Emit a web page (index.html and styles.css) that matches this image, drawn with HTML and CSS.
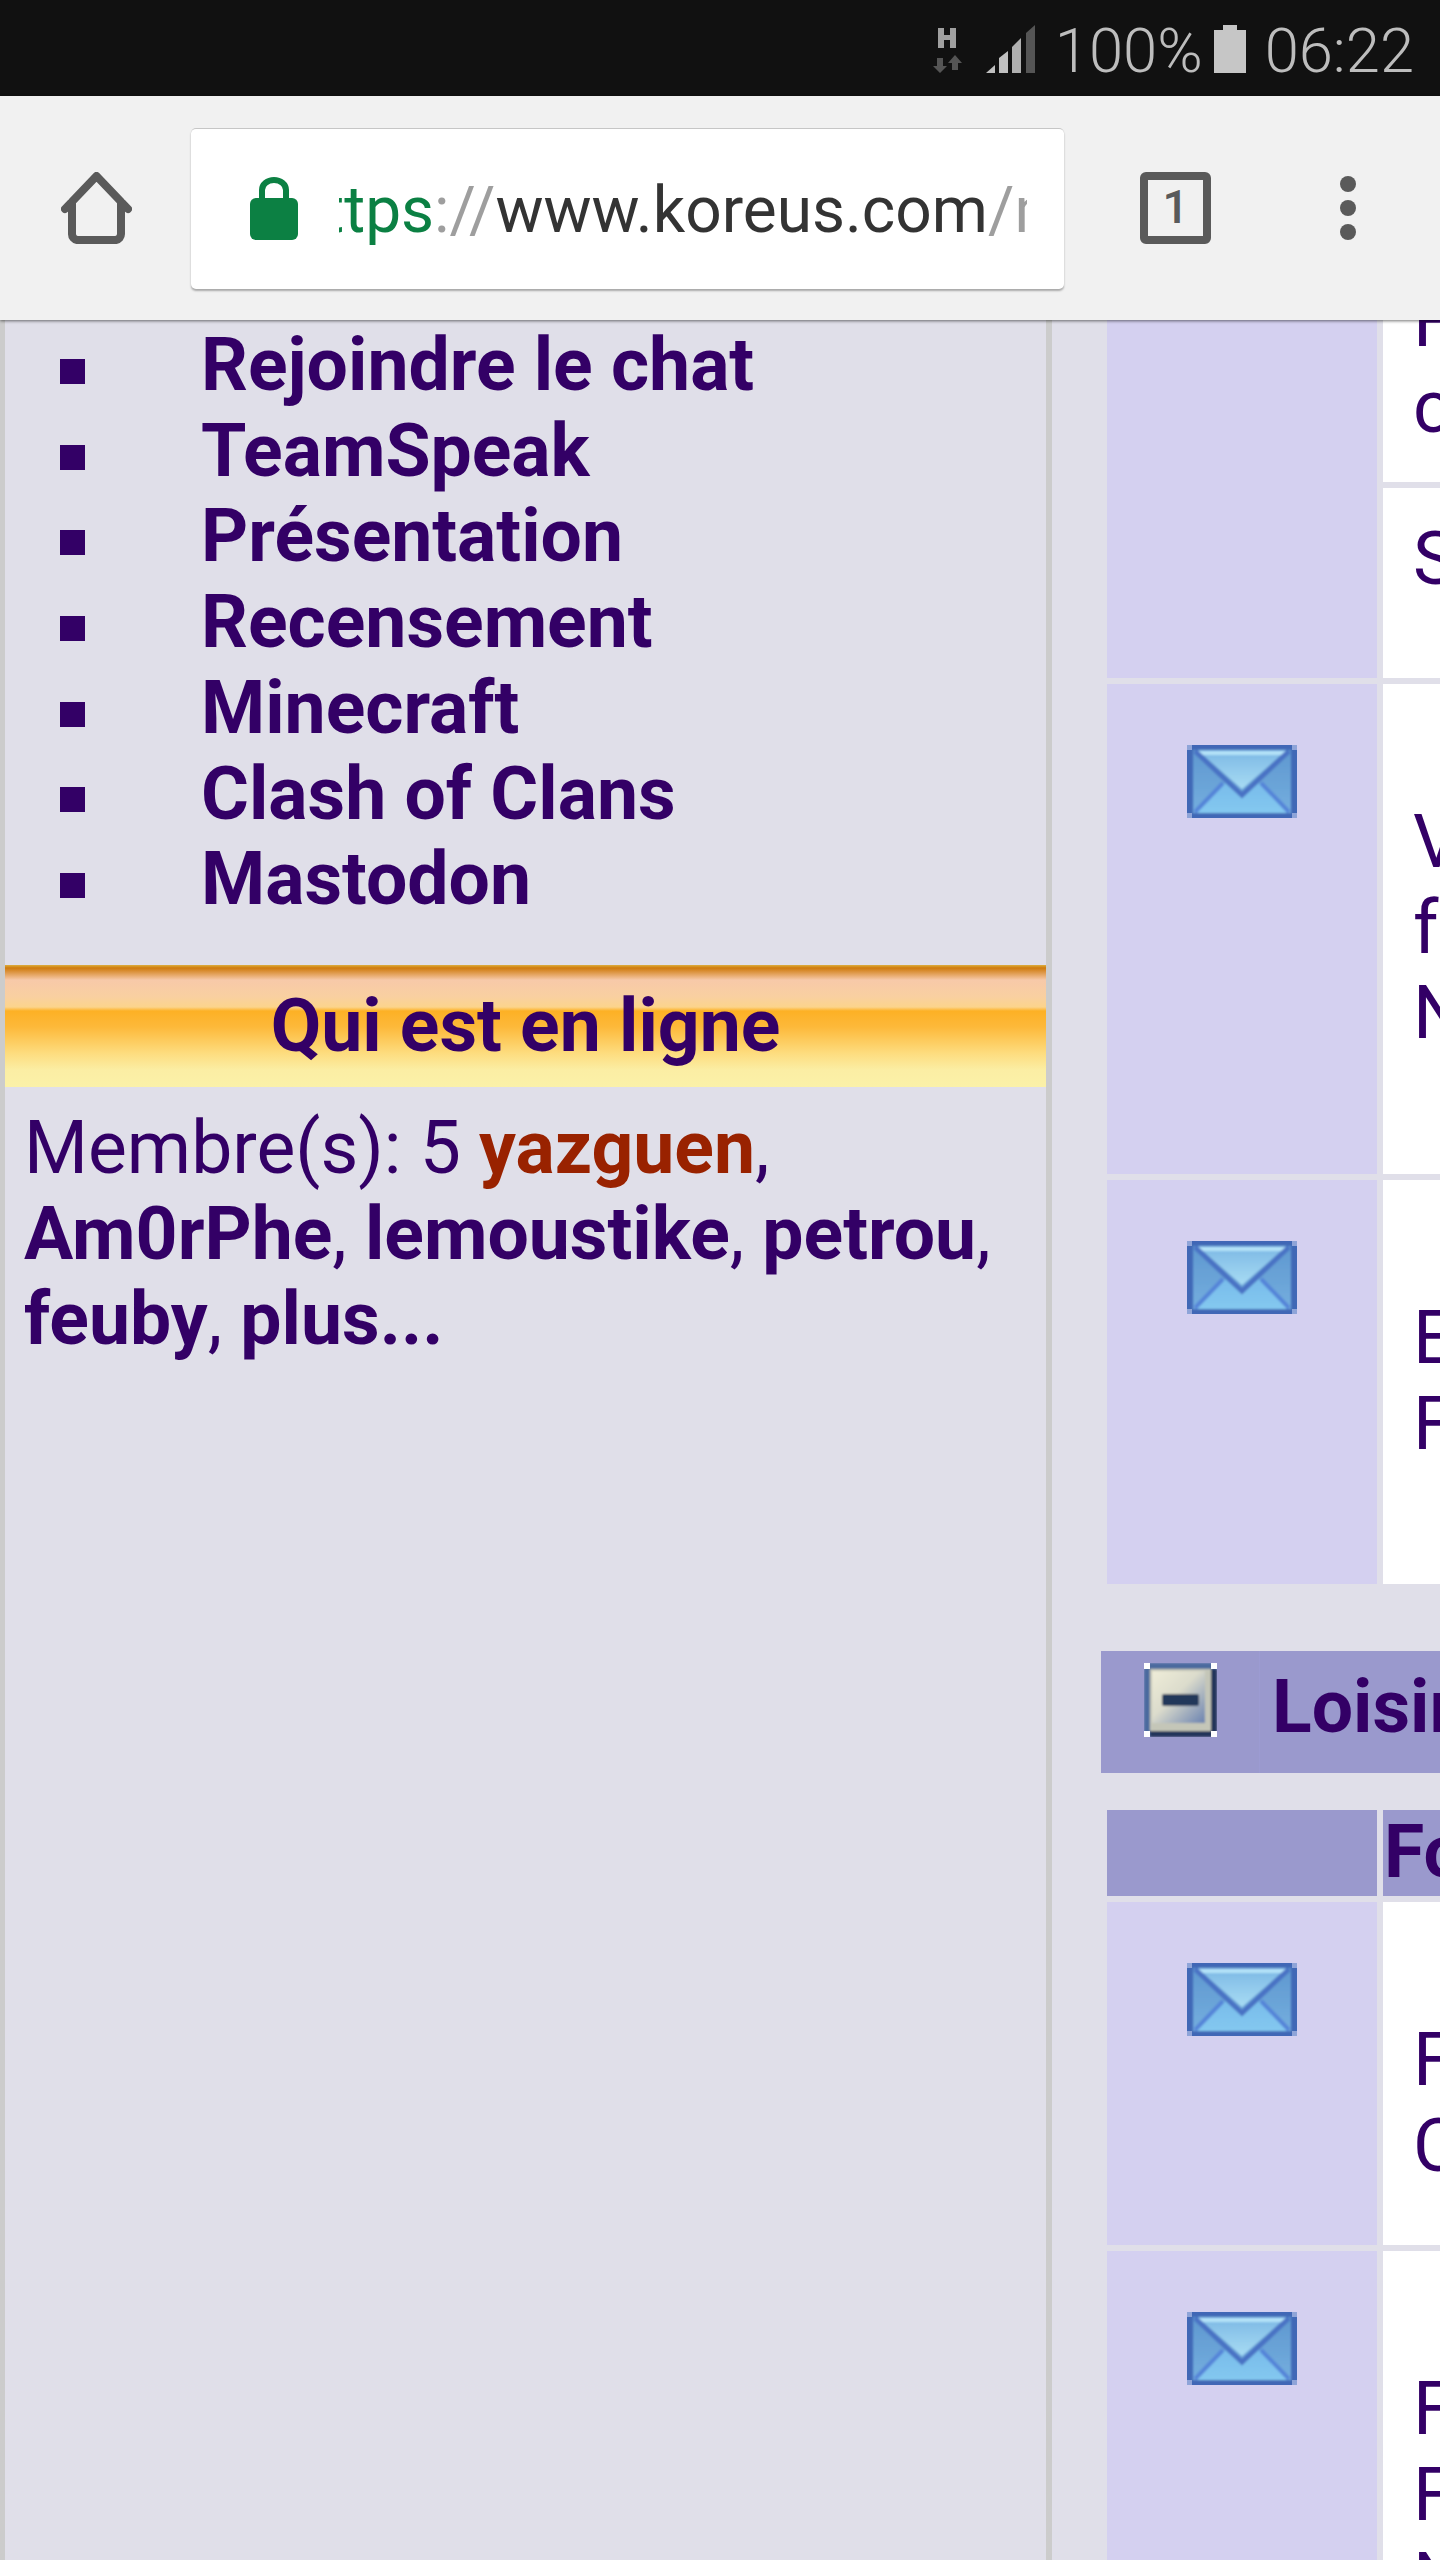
FILE: index.html
```html
<!DOCTYPE html>
<html lang="fr">
<head>
  <meta charset="UTF-8">
  <title>Koreus</title>
  <link rel="stylesheet" href="styles.css">
</head>
<body>
  <svg class="defs" width="0" height="0">
    <defs>
      <filter id="soft" x="-5%" y="-5%" width="110%" height="110%">
        <feGaussianBlur stdDeviation="0.9"/>
      </filter>
      <linearGradient id="envBottom" x1="0" y1="0" x2="0" y2="1">
        <stop offset="0" stop-color="#78bcea"/>
        <stop offset="1" stop-color="#84c8f0"/>
      </linearGradient>
      <linearGradient id="envSide" x1="0" y1="0" x2="0" y2="1">
        <stop offset="0" stop-color="#5f98d0"/>
        <stop offset="1" stop-color="#74aede"/>
      </linearGradient>
      <linearGradient id="envFlap" x1="0" y1="0" x2="0" y2="1">
        <stop offset="0" stop-color="#7cb8e4"/>
        <stop offset="1" stop-color="#a8dcf4"/>
      </linearGradient>
      <linearGradient id="minusFace" x1="0" y1="0" x2="1" y2="1">
        <stop offset="0" stop-color="#eeecd8"/>
        <stop offset="0.45" stop-color="#dcdccc"/>
        <stop offset="1" stop-color="#6a82b0"/>
      </linearGradient>
      <symbol id="envelope" viewBox="0 0 110 73">
        <rect width="110" height="73" fill="#4068b6"/>
        <g filter="url(#soft)">
          <rect x="6" y="5" width="98" height="63" fill="url(#envSide)"/>
          <path d="M8 68L38 38L55 52L72 38L102 68Z" fill="url(#envBottom)"/>
          <path d="M10 5H100L55 44Z" fill="url(#envFlap)"/>
          <rect x="12" y="6" width="86" height="4" fill="#b4e2f8"/>
          <path d="M8 6L55 50L102 6" fill="none" stroke="#4a72c4" stroke-width="5"/>
          <path d="M8 67L36 38M102 67L74 38" fill="none" stroke="#5584d8" stroke-width="4"/>
          <rect x="0" y="0" width="110" height="4" fill="#4068b6"/>
          <rect x="0" y="68" width="110" height="5" fill="#4068b6"/>
        </g>
        <path d="M0 0h5v5H0zM105 0h5v5h-5zM0 68h5v5H0zM105 68h5v5h-5z" fill="#8ea4d8"/>
      </symbol>
    </defs>
  </svg>

  <header class="statusbar">
    <svg class="ic-network" width="30" height="46" viewBox="0 0 30 46">
      <path d="M5 0h6v7h6V0h6v20h-6v-8h-6v8H5z" fill="#a0a0a0"/>
      <path d="M4 30h6v8h4l-7 7-7-7h4z" fill="#555"/>
      <path d="M22 27l7 8h-4v7h-6v-7h-4z" fill="#555"/>
    </svg>
    <svg class="ic-signal" width="49" height="48" viewBox="0 0 49 48">
      <path d="M0 48L9 40V48Z" fill="#c0c0c0"/>
      <path d="M13 33L22 26V48H13Z" fill="#c0c0c0"/>
      <path d="M26 22L35 13V48H26Z" fill="#b0b0b0"/>
      <path d="M40 8L49 0V48H40Z" fill="#555"/>
    </svg>
    <span class="status-text pct">100%</span>
    <svg class="ic-battery" width="32" height="48" viewBox="0 0 32 48">
      <path d="M9 0h14v5h9v43H0V5h9z" fill="#c6c6c6"/>
    </svg>
    <span class="status-text clock">06:22</span>
  </header>

  <div class="toolbar">
    <svg class="ic-home" width="71" height="72" viewBox="0 0 71 72">
      <path d="M4 37L35.500 4L67 37M11 30V62a6 6 0 0 0 5 6H55a6 6 0 0 0 5-6V30" fill="none" stroke="#5a5a5a" stroke-width="8" stroke-linecap="round" stroke-linejoin="round"/>
    </svg>
    <div class="omnibox">
      <svg class="ic-lock" width="48" height="63" viewBox="0 0 48 63">
        <path d="M12 24V13a12 10 0 0 1 24 0v11" fill="none" stroke="#0c8043" stroke-width="6"/>
        <rect y="21" width="48" height="42" rx="6" fill="#0c8043"/>
      </svg>
      <div class="url"><span class="url-inner"><span class="scheme">https</span><span class="dim">://</span>www.koreus.com<span class="dim">/modules</span></span></div>
    </div>
    <div class="tab-count">1</div>
    <div class="menu-dots"><i></i><i></i><i></i></div>
  </div>

  <main class="page">
    <aside class="sidebar">
      <ul class="links">
        <li>Rejoindre le chat</li>
        <li>TeamSpeak</li>
        <li>Présentation</li>
        <li>Recensement</li>
        <li>Minecraft</li>
        <li>Clash of Clans</li>
        <li>Mastodon</li>
      </ul>
      <h2 class="block-title">Qui est en ligne</h2>
      <p class="online">Membre(s): 5 <b class="admin">yazguen</b>, <b>Am0rPhe</b>, <b>lemoustike</b>, <b>petrou</b>, <b>feuby</b>, <b>plus...</b></p>
    </aside>

    <section class="forums">
      <div class="forum-table">
        <div class="icon-cell tall"></div>
        <div class="text-cell compact row-a">F<br>c</div>
        <div class="text-cell compact row-b">S</div>
        <div class="icon-cell row-c"><svg class="env"><use href="#envelope"/></svg></div>
        <div class="text-cell row-c">V<br>f<br>N</div>
        <div class="icon-cell row-d"><svg class="env"><use href="#envelope"/></svg></div>
        <div class="text-cell row-d">E<br>F</div>
      </div>

      <div class="cat-head">
        <div class="cat-toggle">
          <svg width="73" height="74" viewBox="0 0 73 74">
            <g filter="url(#soft)">
              <rect width="73" height="74" fill="#24365a"/>
              <path d="M0 0H73V6H6V74H0Z" fill="#4c6a9e"/>
              <rect x="6" y="6" width="61" height="62" fill="#c4c6b8"/>
              <rect x="8" y="8" width="53" height="52" fill="url(#minusFace)"/>
              <rect x="18" y="31" width="37" height="12" rx="2" fill="#23385a"/>
            </g>
            <path d="M0 0h6v6H0zM67 0h6v6h-6zM0 68h6v6H0zM67 68h6v6h-6z" fill="#fff"/>
          </svg>
        </div>
        <div class="cat-name">Loisirs</div>
      </div>

      <div class="forum-table">
        <div class="head-cell"></div>
        <div class="head-cell title">Forum</div>
        <div class="icon-cell row-e"><svg class="env"><use href="#envelope"/></svg></div>
        <div class="text-cell row-e">F<br>C</div>
        <div class="icon-cell row-f"><svg class="env"><use href="#envelope"/></svg></div>
        <div class="text-cell row-f">F<br>F<br>N</div>
      </div>
    </section>
  </main>
</body>
</html>
```
FILE: styles.css
```css
html, body {
  margin: 0;
  padding: 0;
}
body {
  width: 1440px;
  height: 2560px;
  overflow: hidden;
  font-family: Roboto, "Liberation Sans", sans-serif;
  font-size: 73.3px;
  line-height: 85.7px;
  color: #330066;
  background: #e0dfe9;
}
.defs {
  position: absolute;
}

/* phone status bar */
.statusbar {
  height: 96px;
  background: #111;
  display: flex;
  align-items: center;
  justify-content: flex-end;
  padding: 0 26px 0 0;
  box-sizing: border-box;
}
.status-text {
  font-size: 61.5px;
  font-weight: 300;
  line-height: 96px;
  margin-top: 5px;
  color: #bdbdbd;
}
.ic-network {
  margin-right: 23px;
  margin-top: 6px;
}
.ic-signal {
  margin-right: 20px;
  margin-top: 2px;
}
.pct {
  margin-right: 11px;
}
.ic-battery {
  margin-right: 19px;
  margin-top: 2px;
}

/* chrome toolbar */
.toolbar {
  position: relative;
  z-index: 2;
  height: 224px;
  background: #f1f1f1;
  box-shadow: 0 1px 3px rgba(0, 0, 0, 0.55);
  display: flex;
  align-items: center;
}
.ic-home {
  margin-left: 61px;
  flex: none;
}
.omnibox {
  margin-left: 59px;
  width: 873px;
  height: 161px;
  box-sizing: border-box;
  background: #fff;
  border-radius: 5px;
  border-top: 1px solid #c6c6c6;
  box-shadow: 0 2px 2px rgba(0, 0, 0, 0.3);
  display: flex;
  align-items: center;
}
.ic-lock {
  margin-left: 59px;
  flex: none;
}
.url {
  margin-left: 41px;
  width: 688px;
  height: 100px;
  margin-top: 5px;
  overflow: hidden;
  font-size: 64px;
  line-height: 100px;
  color: #333;
  white-space: nowrap;
}
.url-inner {
  display: inline-block;
  margin-left: -51px;
}
.scheme {
  color: #0b8043;
}
.dim {
  color: #9e9e9e;
}
.tab-count {
  margin-left: 76px;
  width: 71px;
  height: 72px;
  box-sizing: border-box;
  border: 8px solid #5a5a5a;
  border-radius: 6px;
  font-size: 46px;
  font-weight: 500;
  line-height: 54px;
  color: #5a5a5a;
  text-align: center;
}
.menu-dots {
  margin-left: 129px;
  display: flex;
  flex-direction: column;
  gap: 8px;
}
.menu-dots i {
  display: block;
  width: 16px;
  height: 16px;
  border-radius: 50%;
  background: #5a5a5a;
}

/* page */
.page {
  display: flex;
  height: 2240px;
}
.sidebar {
  width: 1052px;
  flex: none;
  box-sizing: border-box;
  border-left: 5px solid #ccc;
  border-right: 6px solid #ccc;
  padding-top: 3px;
}
.links {
  list-style: none;
  margin: 0 0 42px;
  padding: 0 0 0 55px;
  font-weight: 700;
}
.links li {
  display: flex;
  align-items: center;
}
.links li::before {
  content: "";
  width: 25px;
  height: 25px;
  margin-right: 116px;
  margin-top: 11px;
  background: #330066;
}
.block-title {
  margin: 0;
  height: 122px;
  padding-top: 19px;
  box-sizing: border-box;
  font-size: 73.3px;
  font-weight: 700;
  line-height: 85.7px;
  text-align: center;
  background: linear-gradient(#dcae3e 0, #cf7a0c 3px, #f7c9a9 15px, #f9d0a0 32px, #fcd48c 42px, #fdb125 46px, #fdb93a 62px, #fddc7e 88px, #fbeea4 105px, #fbf1a8 122px);
}
.online {
  margin: 0;
  padding: 19px 20px 0 19px;
}
.admin {
  color: #992200;
}
.forums {
  flex: 1;
  min-width: 0;
  padding-left: 49px;
  margin-top: -70px;
  overflow: hidden;
}
.forum-table {
  display: grid;
  grid-template-columns: 270px 400px;
  gap: 6px;
  margin-left: 6px;
}
.icon-cell {
  background: #d4d0f0;
  padding-top: 61px;
  box-sizing: border-box;
}
.tall {
  grid-row: span 2;
}
.env {
  display: block;
  width: 110px;
  height: 73px;
  margin: 0 auto;
}
.text-cell {
  background: #fff;
  padding: 116px 0 0 30px;
  box-sizing: border-box;
}
.compact {
  padding-top: 29px;
}
.row-a {
  height: 232px;
}
.row-b {
  height: 190px;
}
.row-c {
  height: 490px;
}
.row-d {
  height: 404px;
}
.row-e {
  height: 343px;
}
.row-f {
  height: 400px;
}
.cat-head {
  display: flex;
  height: 122px;
  margin-top: 67px;
  margin-bottom: 37px;
  background: #9a99cd;
}
.cat-toggle {
  width: 159px;
  flex: none;
  padding: 12px 0 0 43px;
  box-sizing: border-box;
  border-right: 1px solid #9c9bd2;
}
.cat-name {
  padding-left: 12px;
  font-weight: 700;
  line-height: 112px;
  white-space: nowrap;
}
.head-cell {
  height: 86px;
  background: #9a99cd;
}
.title {
  padding-left: 1px;
  font-weight: 700;
  line-height: 84px;
}
```
